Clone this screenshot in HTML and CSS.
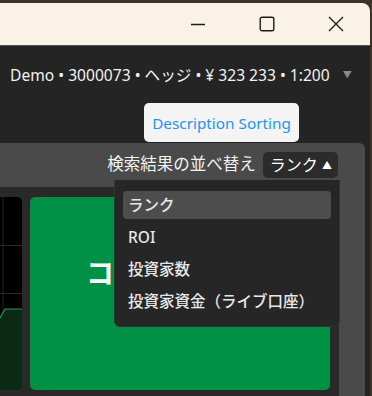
FILE: index.html
```html
<!DOCTYPE html>
<html lang="ja">
<head>
    <meta charset="UTF-8">
    <meta name="viewport" content="width=device-width, initial-scale=1.0">
    <title>Copy Trading</title>
    <link rel="stylesheet" href="styles.css">
</head>
<body>

    <div class="window">
        <!-- Barra de título -->
        <div class="titlebar">
            <span class="tb-btn">
                <svg width="16" height="16" viewBox="0 0 16 16"><path d="M1 8.5 H15" stroke="#1c1c1c" stroke-width="1.3" fill="none"/></svg>
            </span>
            <span class="tb-btn">
                <svg width="16" height="16" viewBox="0 0 16 16"><rect x="1.2" y="1.2" width="13.6" height="13.6" rx="2" stroke="#1c1c1c" stroke-width="1.4" fill="none"/></svg>
            </span>
            <span class="tb-btn">
                <svg width="16" height="16" viewBox="0 0 16 16"><path d="M1 1 L15 15 M15 1 L1 15" stroke="#1c1c1c" stroke-width="1.3" fill="none"/></svg>
            </span>
        </div>

        <div class="app">
            <!-- Cuenta -->
            <div class="account">
                <span class="account-text">Demo • 3000073 • ヘッジ • ¥ 323 233 • 1:200</span>
                <span class="account-arrow">▼</span>
            </div>

            <div class="actions">
                <button class="desc-btn">Description Sorting</button>
            </div>

            <!-- Panel de resultados -->
            <div class="panel">
                <div class="sort-row">
                    <span class="sort-label">検索結果の並べ替え</span>
                    <div class="sort-select">ランク <span class="sort-caret">▲</span></div>
                </div>

                <div class="cards">
                    <div class="chart-card">
                        <svg width="22" height="193" viewBox="0 0 22 193">
                            <path d="M3 0 V193" stroke="#222" stroke-width="1"/>
                            <path d="M0 48.5 H22 M0 96.5 H22 M0 144.5 H22" stroke="#2a2a2a" stroke-width="1"/>
                            <path d="M0 121 L5 112 L22 112 V193 H0 Z" fill="#0a2a16"/>
                            <path d="M0 121 L5 112 L22 112" stroke="#2f9a4a" stroke-width="1.2" fill="none"/>
                        </svg>
                    </div>
                    <div class="copy-card">コピー</div>
                </div>

                <!-- Menú desplegable -->
                <ul class="sort-menu">
                    <li class="active">ランク</li>
                    <li>ROI</li>
                    <li>投資家数</li>
                    <li>投資家資金（ライブ口座）</li>
                </ul>
            </div>
        </div>
    </div>

</body>
</html>
```

FILE: styles.css
```css
body {
    margin: 0;
    padding: 0;
    width: 372px;
    height: 396px;
    overflow: hidden;
    background-color: #3d3324;
    font-family: "Noto Sans", "Noto Sans CJK JP", sans-serif;
}

.window {
    margin-top: 3px;
    width: 370px;
    height: 393px;
    background-color: #242424;
    border-top-right-radius: 8px;
    overflow: hidden;
}

.titlebar {
    height: 42px;
    background-color: #f9f2e5;
    border-bottom: 1px solid #555555;
    display: flex;
    justify-content: flex-end;
}

.tb-btn {
    width: 69px;
    display: flex;
    align-items: center;
    justify-content: center;
}

.account {
    padding: 20px 0 0 10px;
    height: 18px;
    line-height: 18px;
    display: flex;
    align-items: center;
    color: #f2f2f2;
    font-size: 15.6px;
    white-space: nowrap;
}

.account-arrow {
    margin-left: 13px;
    font-size: 9px;
    color: #8a8a8a;
}

.actions {
    margin-top: 19px;
    padding-left: 144px;
}

.desc-btn {
    display: block;
    height: 39px;
    width: 155px;
    background-color: #f4f4f4;
    color: #1e96ee;
    border: none;
    border-radius: 5px;
    font-family: "Noto Sans", sans-serif;
    font-size: 15.3px;
    padding: 0;
    margin-bottom: 1px;
    white-space: nowrap;
}

.panel {
    position: relative;
    width: 365px;
    height: 253px;
    background-color: #4a4a4a;
    border-top-right-radius: 6px;
}

.sort-row {
    height: 44px;
    box-sizing: border-box;
    padding: 9px 27px 0 0;
    display: flex;
    justify-content: flex-end;
    align-items: flex-start;
    gap: 7px;
}

.sort-label {
    line-height: 24px;
    font-size: 16.5px;
    color: #f2f2f2;
}

.sort-select {
    height: 26px;
    line-height: 26px;
    padding: 0 6px 0 7px;
    background-color: #2b2b2b;
    border-radius: 5px;
    color: #ffffff;
    font-size: 16px;
    white-space: nowrap;
}

.sort-caret {
    font-size: 10px;
    vertical-align: 2px;
}

.cards {
    width: 339px;
    height: 209px;
    box-sizing: border-box;
    background-color: #292929;
    padding: 10px 9px 6px 0;
    display: flex;
    gap: 8px;
}

.chart-card {
    width: 22px;
    background-color: #000000;
    border-radius: 0 5px 5px 0;
    overflow: hidden;
}

.chart-card svg {
    display: block;
}

.copy-card {
    flex: 1;
    background-color: #009146;
    border-radius: 5px;
    color: #ffffff;
    font-weight: bold;
    font-size: 28px;
    line-height: 34px;
    padding: 59px 0 0 56px;
    box-sizing: border-box;
}

.sort-menu {
    position: absolute;
    top: 37px;
    left: 114px;
    width: 226px;
    box-sizing: border-box;
    margin: 0;
    padding: 11px 8px 7px;
    list-style: none;
    background-color: #262626;
    border: 1px solid #333333;
    border-top: none;
    border-radius: 0 0 6px 6px;
}

.sort-menu li {
    height: 28px;
    line-height: 28px;
    padding: 0 5px;
    margin-bottom: 4px;
    border-radius: 4px;
    color: #e8e8e8;
    font-size: 15.5px;
    font-weight: 500;
}

.sort-menu li.active {
    background-color: #4d4d4d;
}
```
